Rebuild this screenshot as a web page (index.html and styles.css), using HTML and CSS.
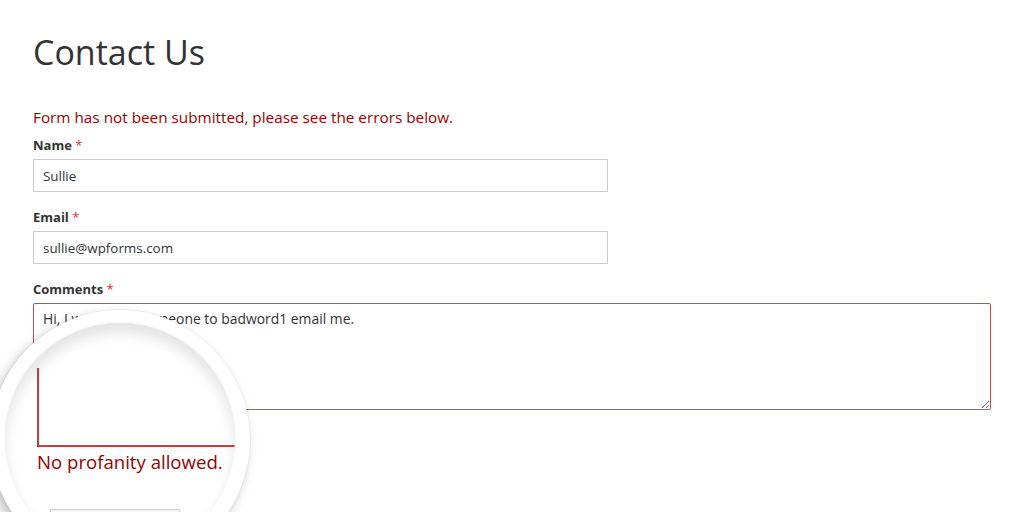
FILE: index.html
```html
<!DOCTYPE html>
<html>
<head>
<meta charset="utf-8">
<link rel="stylesheet" href="styles.css">
</head>
<body>
<main class="page">
  <h1 class="title">Contact Us</h1>
  <p class="form-error">Form has not been submitted, please see the errors below.</p>
  <form class="form">
    <div class="field">
      <label class="label">Name <span class="req">*</span></label>
      <input class="input" type="text" value="Sullie">
    </div>
    <div class="field">
      <label class="label">Email <span class="req">*</span></label>
      <input class="input" type="text" value="sullie@wpforms.com">
    </div>
    <div class="field">
      <label class="label">Comments <span class="req">*</span></label>
      <textarea class="textarea">Hi, I would like someone to badword1 email me.</textarea>
    </div>
  </form>
  <div class="lens">
    <div class="lens-inner">
      <div class="mag-box"></div>
      <div class="mag-error">No profanity allowed.</div>
      <div class="mag-button"></div>
    </div>
  </div>
</main>
</body>
</html>
```
FILE: styles.css
```css
html, body {
  margin: 0;
  padding: 0;
  background: #fff;
}
.page {
  position: relative;
  width: 1024px;
  height: 512px;
  overflow: hidden;
  padding: 0 0 0 33px;
  box-sizing: border-box;
  font-family: "Open Sans", "DejaVu Sans", sans-serif;
}
.title {
  margin: 28px 0 0 0;
  font-size: 34px;
  line-height: 48px;
  font-weight: 400;
  color: #333;
}
.form-error {
  margin: 31px 0 0 0;
  font-size: 15.3px;
  line-height: 20px;
  color: #990000;
}
.form {
  display: flex;
  flex-direction: column;
  gap: 16px;
  margin-top: 9px;
}
.field {
  display: flex;
  flex-direction: column;
  gap: 5px;
}
.label {
  font-size: 13px;
  line-height: 18px;
  font-weight: 700;
  color: #333;
}
.req {
  color: #d63637;
  font-weight: 400;
}
.input {
  width: 575px;
  height: 33px;
  box-sizing: border-box;
  border: 1px solid #ccc;
  padding: 0 9px;
  font-family: inherit;
  font-size: 13.4px;
  color: #333;
  outline: none;
  margin: 0;
}
.textarea {
  width: 958px;
  height: 107px;
  box-sizing: border-box;
  border: 1px solid #cc4b4b;
  border-radius: 2px;
  padding: 5px 9px;
  font-family: inherit;
  font-size: 13.9px;
  color: #333;
  margin: 0;
  resize: vertical;
  outline: none;
}
.lens {
  position: absolute;
  left: -10px;
  top: 310px;
  width: 260px;
  height: 260px;
  border-radius: 50%;
  background: #fff;
  box-shadow: -4px 5px 12px rgba(0,0,0,0.25), 0 0 0 1px rgba(0,0,0,0.03);
}
.lens-inner {
  position: absolute;
  left: 15px;
  top: 13px;
  width: 230px;
  height: 230px;
  border-radius: 50%;
  overflow: hidden;
  background: #fff;
  box-shadow: inset 0 10px 14px rgba(0,0,0,0.11), 0 0 3px rgba(0,0,0,0.08);
}
.mag-box {
  position: absolute;
  left: 32px;
  top: 45px;
  width: 260px;
  height: 77px;
  border-left: 2px solid #c04040;
  border-bottom: 2px solid #c04040;
}
.mag-error {
  position: absolute;
  left: 32px;
  top: 126px;
  font-size: 18.6px;
  line-height: 26px;
  color: #990000;
  white-space: nowrap;
}
.mag-button {
  position: absolute;
  left: 45px;
  top: 186px;
  width: 128px;
  height: 40px;
  border: 1px solid #ccc;
  background: #f5f5f5;
}
```
